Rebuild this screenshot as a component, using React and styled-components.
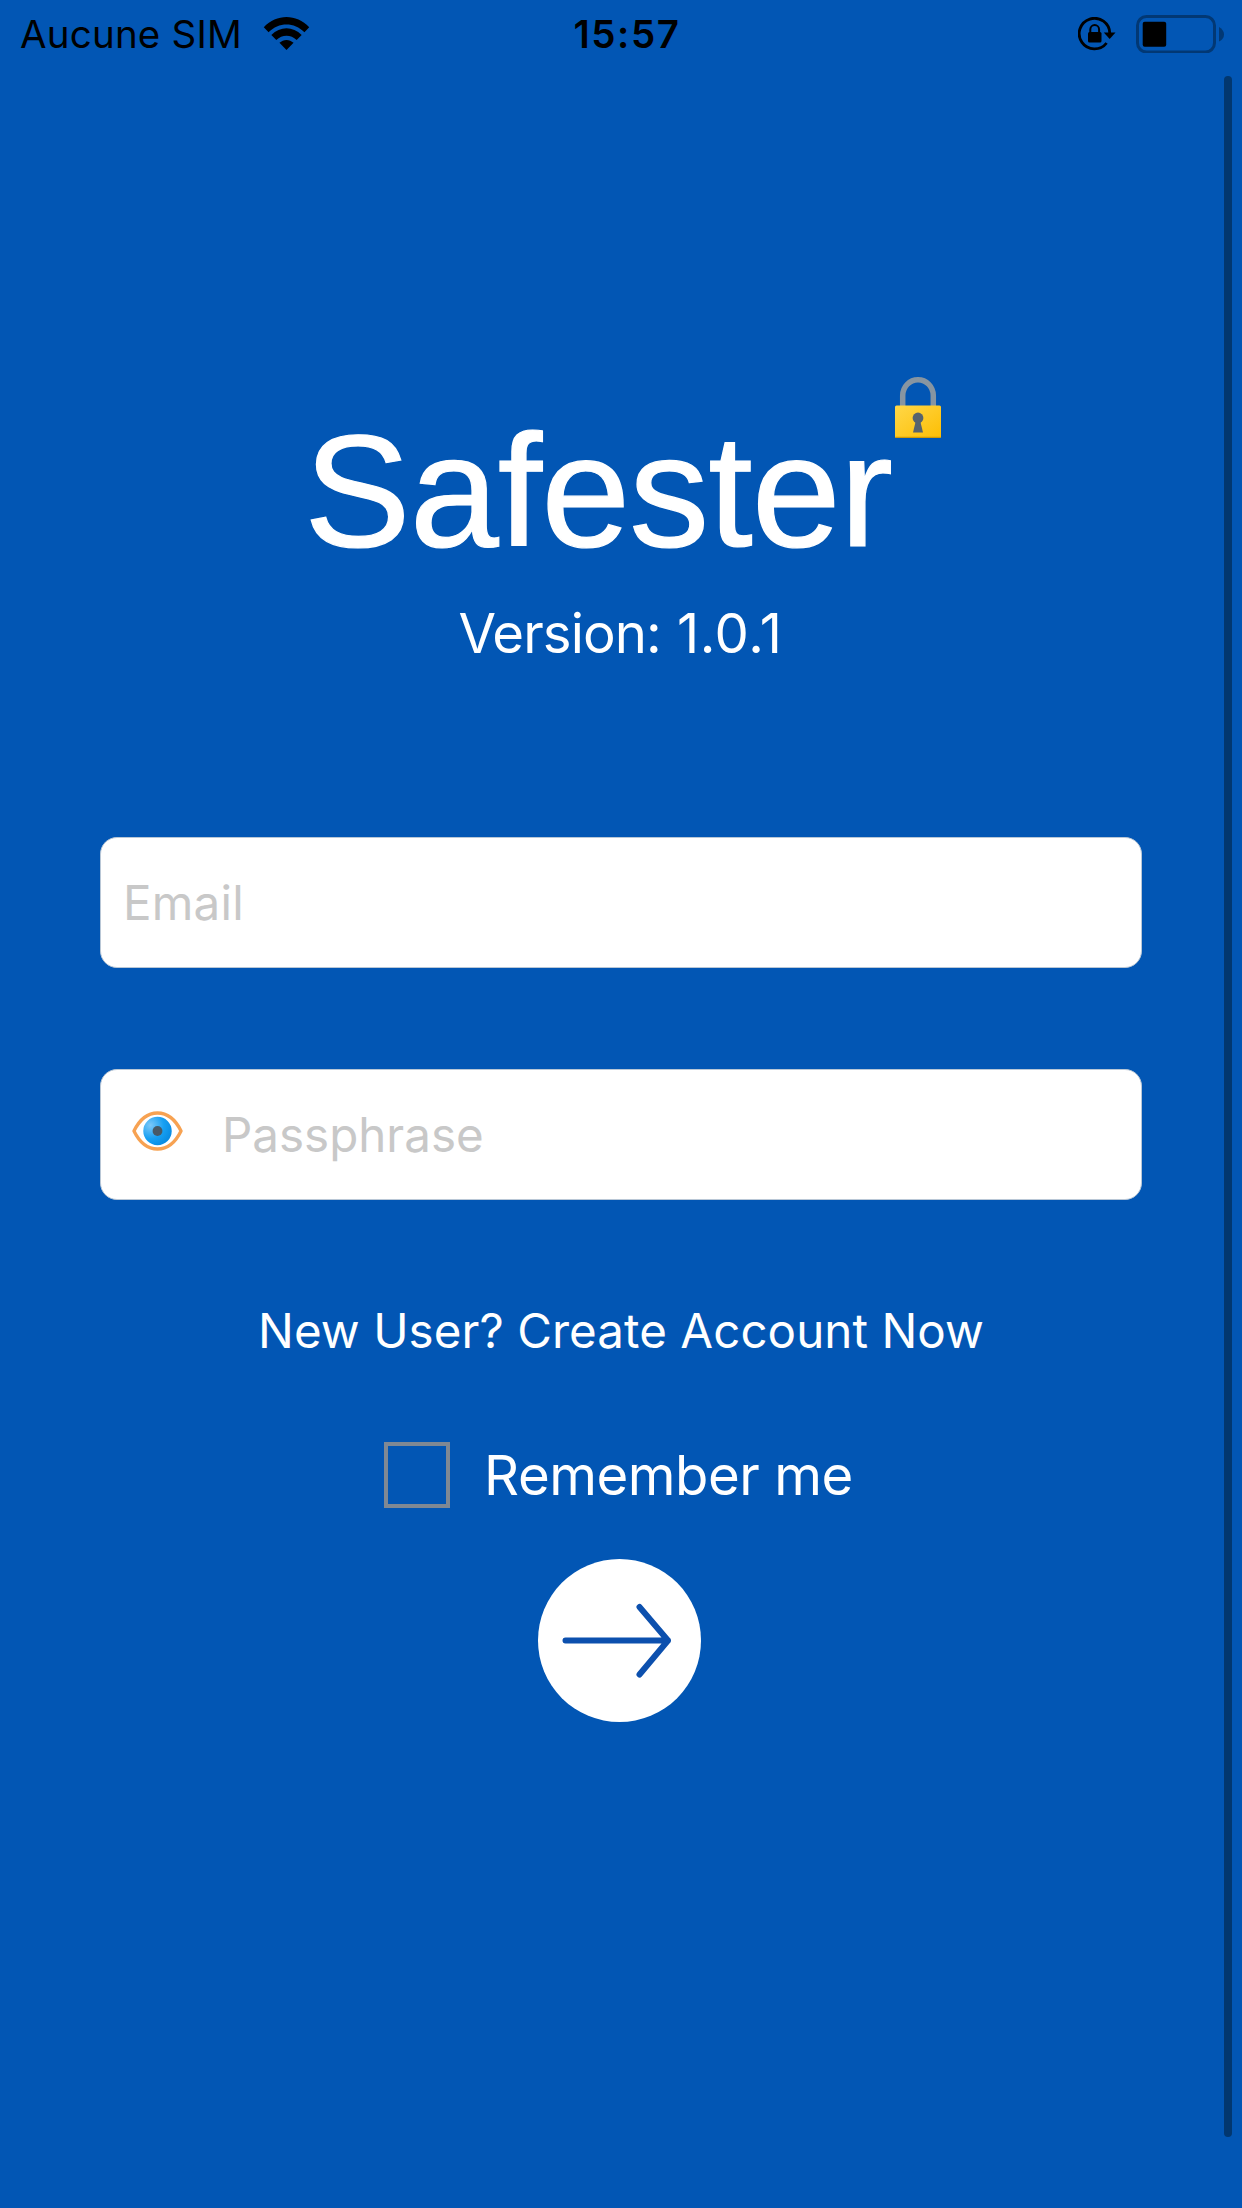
import React from "react";
import styled, { createGlobalStyle } from "styled-components";

const Global = createGlobalStyle`
  * { box-sizing: border-box; }
  body { margin: 0; background: #0256b4; }
`;

const Screen = styled.div`
  width: 1242px;
  height: 2208px;
  position: relative;
  display: flex;
  flex-direction: column;
  overflow: hidden;
  background: #0256b4;
  color: #fff;
  font-family: Inter, "Liberation Sans", sans-serif;
`;

const StatusBar = styled.header`
  height: 68px;
  padding: 0 17px 0 20px;
  display: grid;
  grid-template-columns: 1fr auto 1fr;
  align-items: center;
  color: #000;
  font-size: 38.5px;
  line-height: 68px;
`;

const StatusSide = styled.div`
  display: flex;
  align-items: center;
  justify-content: ${(p) => (p.$end ? "flex-end" : "flex-start")};
  gap: ${(p) => p.$gap}px;
`;

const Carrier = styled.span`
  letter-spacing: 0.2px;
  white-space: nowrap;
`;

const Clock = styled.span`
  padding-left: 9px;
  font-weight: 600;
  letter-spacing: 1.6px;
`;

const Main = styled.main`
  display: flex;
  flex-direction: column;
  align-items: center;
`;

const Brand = styled.div`
  position: relative;
  margin-top: 342px;
  margin-right: 46px;
`;

const Title = styled.h1`
  margin: 0;
  font: 400 160px/162px "Liberation Sans", Arial, sans-serif;
  letter-spacing: -1px;
  -webkit-text-stroke: 1.2px #fff;
`;

const LockBadge = styled.svg`
  position: absolute;
  right: -50px;
  top: -34px;
`;

const Version = styled.p`
  display: flex;
  gap: 16px;
  margin: 31px 1px 0 0;
  font-size: 54.5px;
  line-height: 60px;
`;

const Tracked = styled.span`
  letter-spacing: ${(p) => p.$track}px;
`;

const Form = styled.form`
  width: 1042px;
  margin-top: 174px;
  display: flex;
  flex-direction: column;
  gap: 101px;
`;

const Field = styled.label`
  height: 131px;
  display: flex;
  align-items: center;
  padding: 1px 0 0 ${(p) => p.$pad}px;
  gap: 39px;
  border-radius: 17px;
  background: #fff;
  border: 1px solid #b9c7d6;
  color: #c8c8c8;
  font-size: 47.5px;
  line-height: 60px;
`;

const EyeIcon = styled.svg`
  margin-top: -9px;
`;

const SignUp = styled.a`
  margin-top: 101px;
  font-size: 47.5px;
  line-height: 60px;
  letter-spacing: 0.06px;
  white-space: nowrap;
`;

const Remember = styled.label`
  margin: 81px 5px 0 0;
  display: flex;
  align-items: center;
  gap: 34px;
  font-size: 54.5px;
  line-height: 66px;
`;

const Box = styled.span`
  width: 66px;
  height: 66px;
  border: 4px solid #7f8893;
`;

const Submit = styled.button`
  width: 163px;
  height: 163px;
  margin: 51px 3px 0 0;
  padding: 0;
  border: 0;
  border-radius: 50%;
  background: #fff;
`;

const ScrollBar = styled.div`
  position: absolute;
  right: 10px;
  top: 76px;
  width: 8px;
  height: 2061px;
  border-radius: 4px;
  background: #02376f;
`;

const Wifi = () => (
  <svg width="47" height="36" viewBox="0 0 48 36">
    <path d="M0.8 11.2C14-2.800 34-2.800 47.200 11.200L42.300 16.200C32 5.500 16 5.500 5.700 16.200Z" />
    <path d="M8.500 19C17.500 10 30.500 10 39.500 19L34.400 24.200C28.500 18.300 19.500 18.300 13.600 24.200Z" />
    <path d="M16.800 27C21 23 27 23 31.200 27L24 34.400Z" />
  </svg>
);

const RotationLock = () => (
  <svg width="38" height="34" viewBox="0 0 38 34">
    <path d="M31.800 16.500A15.300 15.300 0 1 0 28.600 26" fill="none" stroke="#000" strokeWidth="2.800" />
    <path d="M25.800 15.500H37.500L31.700 22Z" />
    <rect x="10" y="15" width="13.500" height="10.500" rx="1.500" />
    <path d="M12.300 16V12.500A4.400 4.400 0 0 1 21.100 12.500V16" fill="none" stroke="#000" strokeWidth="2" />
  </svg>
);

const Battery = () => (
  <svg width="89" height="38" viewBox="0 0 89 38">
    <rect x="1.500" y="1.500" width="77" height="35.500" rx="9" fill="none" stroke="#023874" strokeWidth="3" />
    <rect x="6.700" y="6.700" width="23.500" height="25" rx="2" />
    <path d="M83 12Q88 15 88 19.500Q88 24 83 26.500Z" fill="#023874" />
  </svg>
);

const Lock = () => (
  <LockBadge width="48" height="64" viewBox="0 0 48 64">
    <defs>
      <linearGradient id="body" x1="0" y1="0" x2="1" y2="1">
        <stop offset="0" stopColor="#ffd748" />
        <stop offset="1" stopColor="#fdbe04" />
      </linearGradient>
    </defs>
    <path d="M8.700 32V19.500A15.300 15.800 0 0 1 39.300 19.500V32" fill="none" stroke="#8795a1" strokeWidth="5.500" />
    <rect x="1" y="29.500" width="46" height="32.500" rx="1.500" fill="url(#body)" />
    <path d="M1.500 61.300H46.500" stroke="#cf9a08" strokeWidth="1.300" />
    <circle cx="24" cy="42" r="5.400" fill="#57636e" />
    <path d="M22 44H26L29 56.500H19Z" fill="#57636e" />
  </LockBadge>
);

const Eye = () => (
  <EyeIcon width="51" height="40" viewBox="0 0 52 40">
    <defs>
      <radialGradient id="iris" cx="0.250" cy="0.300" r="0.850">
        <stop offset="0" stopColor="#7cc8f8" />
        <stop offset="0.550" stopColor="#18a0f2" />
        <stop offset="1" stopColor="#0588e0" />
      </radialGradient>
    </defs>
    <path d="M2 20C14-4.500 38-4.500 50 20C38 44.500 14 44.500 2 20Z" fill="#fff" stroke="#f7a252" strokeWidth="3.400" strokeLinejoin="round" />
    <circle cx="26" cy="20" r="14.500" fill="url(#iris)" />
    <circle cx="26" cy="20" r="5" fill="#485966" />
  </EyeIcon>
);

const Arrow = () => (
  <svg width="163" height="163" viewBox="0 0 163 163" fill="none" stroke="#0c50ae" strokeWidth="6" strokeLinecap="round" strokeLinejoin="round">
    <path d="M27.500 81.500H130M101.500 48L130 81.500L101.500 115.500" />
  </svg>
);

export default function App() {
  return (
    <Screen>
      <Global />
      <StatusBar>
        <StatusSide $gap={21}>
          <Carrier>Aucune SIM</Carrier>
          <Wifi />
        </StatusSide>
        <Clock>15:57</Clock>
        <StatusSide $end $gap={20}>
          <RotationLock />
          <Battery />
        </StatusSide>
      </StatusBar>
      <Main>
        <Brand>
          <Title>Safester</Title>
          <Lock />
        </Brand>
        <Version>
          <Tracked $track={-0.9}>Version: </Tracked>
          <Tracked $track={0.6}>1.0.1</Tracked>
        </Version>
        <Form>
          <Field $pad={22}>
            <Tracked $track={0.2}>Email</Tracked>
          </Field>
          <Field $pad={31}>
            <Eye />
            <Tracked $track={0}>Passphrase</Tracked>
          </Field>
        </Form>
        <SignUp>New User? Create Account Now</SignUp>
        <Remember>
          <Box />
          <Tracked $track={-0.45}>Remember me</Tracked>
        </Remember>
        <Submit type="button" aria-label="Log in">
          <Arrow />
        </Submit>
      </Main>
      <ScrollBar />
    </Screen>
  );
}
